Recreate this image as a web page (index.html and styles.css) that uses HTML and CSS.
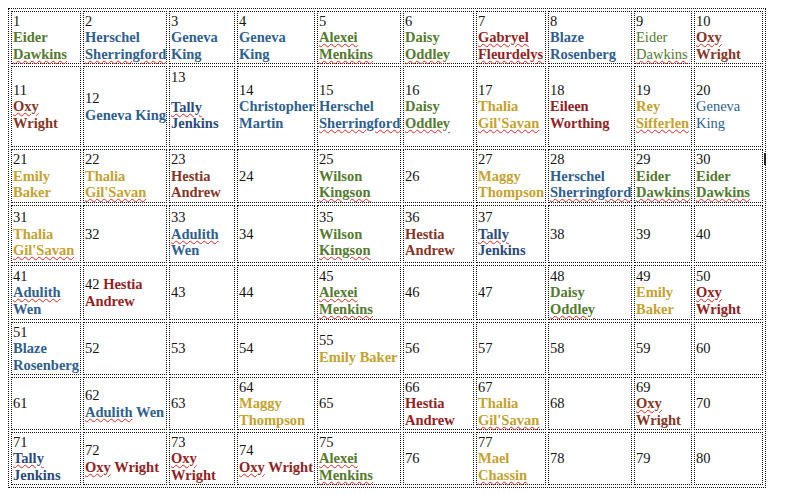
FILE: index.html
```html
<!DOCTYPE html>
<html>
<head>
<meta charset="utf-8">
<link rel="stylesheet" href="styles.css">
</head>
<body>
<svg class="handle" width="9" height="9" viewBox="0 0 9 9"><rect x="0.5" y="0.5" width="7" height="7" fill="#fff" stroke="#8a8a8a"/><path d="M4 1.5V6.5M1.5 4H6.5M3 2.5L4 1.5L5 2.5M3 5.5L4 6.5L5 5.5M2.5 3L1.5 4L2.5 5M5.5 3L6.5 4L5.5 5" fill="none" stroke="#333" stroke-width="0.8"/></svg>
<span class="caret"></span>
<table class="grid">
<colgroup>
<col class="w1"><col class="w2"><col class="w3"><col class="w4"><col class="w5"><col class="w6"><col class="w7"><col class="w8"><col class="w9"><col class="w10">
</colgroup>
<tr class="r1">
<td>1<br><b class="g">Eider <span class="sp">Dawkins</span></b></td>
<td>2<br><b class="b">Herschel <span class="sp">Sherringford</span></b></td>
<td>3<br><b class="b">Geneva King</b></td>
<td>4<br><b class="b">Geneva King</b></td>
<td>5<br><b class="g"><span class="sp">Alexei</span> <span class="sp">Menkins</span></b></td>
<td>6<br><b class="g">Daisy <span class="sp">Oddley</span></b></td>
<td>7<br><b class="r"><span class="sp">Gabryel</span> <span class="sp">Fleurdelys</span></b></td>
<td>8<br><b class="b">Blaze Rosenberg</b></td>
<td>9<br><span class="g">Eider <span class="sp">Dawkins</span></span></td>
<td>10<br><b class="br"><span class="sp">Oxy</span> Wright</b></td>
</tr>
<tr class="r2">
<td>11<br><b class="br"><span class="sp">Oxy</span> Wright</b></td>
<td>12<br><b class="b nw">Geneva King</b></td>
<td class="top">13<b class="nv gap"><span class="sp">Tally</span> Jenkins</b></td>
<td>14<br><b class="b">Christopher Martin</b></td>
<td>15<br><b class="b">Herschel <span class="sp">Sherringford</span></b></td>
<td>16<br><b class="g">Daisy <span class="sp">Oddley</span></b></td>
<td>17<br><b class="y">Thalia <span class="sp">Gil'Savan</span></b></td>
<td>18<br><b class="r">Eileen Worthing</b></td>
<td>19<br><b class="y">Rey <span class="sp">Sifferlen</span></b></td>
<td>20<br><span class="b">Geneva King</span></td>
</tr>
<tr class="r3">
<td>21<br><b class="y">Emily Baker</b></td>
<td>22<br><b class="y">Thalia <span class="sp">Gil'Savan</span></b></td>
<td>23<br><b class="br">Hestia Andrew</b></td>
<td>24</td>
<td>25<br><b class="g">Wilson <span class="sp">Kingson</span></b></td>
<td>26</td>
<td>27<br><b class="y">Maggy Thompson</b></td>
<td>28<br><b class="b">Herschel <span class="sp">Sherringford</span></b></td>
<td>29<br><b class="g">Eider <span class="sp">Dawkins</span></b></td>
<td>30<br><b class="g">Eider <span class="sp">Dawkins</span></b></td>
</tr>
<tr class="r4">
<td>31<br><b class="y">Thalia <span class="sp">Gil'Savan</span></b></td>
<td>32</td>
<td>33<br><b class="b"><span class="sp">Adulith</span> Wen</b></td>
<td>34</td>
<td>35<br><b class="g">Wilson <span class="sp">Kingson</span></b></td>
<td>36<br><b class="br">Hestia Andrew</b></td>
<td>37<br><b class="nv"><span class="sp">Tally</span> Jenkins</b></td>
<td>38</td>
<td>39</td>
<td>40</td>
</tr>
<tr class="r5">
<td>41<br><b class="b"><span class="sp">Adulith</span> Wen</b></td>
<td>42 <b class="r">Hestia Andrew</b></td>
<td>43</td>
<td>44</td>
<td>45<br><b class="g"><span class="sp">Alexei</span> <span class="sp">Menkins</span></b></td>
<td>46</td>
<td>47</td>
<td>48<br><b class="g">Daisy <span class="sp">Oddley</span></b></td>
<td>49<br><b class="y">Emily Baker</b></td>
<td>50<br><b class="r"><span class="sp">Oxy</span> Wright</b></td>
</tr>
<tr class="r6">
<td>51<br><b class="b">Blaze Rosenberg</b></td>
<td>52</td>
<td>53</td>
<td>54</td>
<td>55<br><b class="y nw">Emily Baker</b></td>
<td>56</td>
<td>57</td>
<td>58</td>
<td>59</td>
<td>60</td>
</tr>
<tr class="r7">
<td>61</td>
<td>62<br><b class="b nw"><span class="sp">Adulith</span> Wen</b></td>
<td>63</td>
<td>64<br><b class="y">Maggy Thompson</b></td>
<td>65</td>
<td>66<br><b class="r">Hestia Andrew</b></td>
<td>67<br><b class="y">Thalia <span class="sp">Gil'Savan</span></b></td>
<td>68</td>
<td>69<br><b class="br"><span class="sp">Oxy</span> Wright</b></td>
<td>70</td>
</tr>
<tr class="r8">
<td>71<br><b class="nv"><span class="sp">Tally</span> Jenkins</b></td>
<td>72<br><b class="r nw"><span class="sp">Oxy</span> Wright</b></td>
<td>73<br><b class="r"><span class="sp">Oxy</span> Wright</b></td>
<td>74<br><b class="r nw"><span class="sp">Oxy</span> Wright</b></td>
<td>75<br><b class="g"><span class="sp">Alexei</span> <span class="sp">Menkins</span></b></td>
<td>76</td>
<td>77<br><b class="y">Mael <span class="sp">Chassin</span></b></td>
<td>78</td>
<td>79</td>
<td>80</td>
</tr>
</table>
</body>
</html>
```

FILE: styles.css
```css
html, body {
  background: #fff;
}
body {
  margin: 8px;
  position: relative;
  font-family: "Liberation Serif", "Times New Roman", serif;
  font-size: 14.5px;
  line-height: 16.5px;
  color: #141414;
}
.handle {
  position: absolute;
  left: -8px;
  top: -8px;
  display: block;
}
.caret {
  position: absolute;
  left: 756px;
  top: 145px;
  width: 2px;
  height: 12px;
  background: #222;
}
.grid {
  table-layout: fixed;
  width: 758px;
  border-collapse: separate;
  border-spacing: 2px;
  border: 1px dotted #111;
}
.grid td {
  box-sizing: border-box;
  border: 1px dotted #111;
  padding: 0 1px;
  vertical-align: middle;
  white-space: normal;
  overflow: visible;
}
.grid td.top {
  vertical-align: top;
  padding-top: 2px;
}
.gap {
  display: block;
  margin-top: 13px;
}
.nw {
  white-space: nowrap;
}
.w1 { width: 70px; }
.w2 { width: 84px; }
.w3 { width: 66px; }
.w4 { width: 78px; }
.w5 { width: 84px; }
.w6 { width: 71px; }
.w7 { width: 70px; }
.w8 { width: 84px; }
.w9 { width: 58px; }
.w10 { width: 69px; }
.r1 { height: 53px; }
.r2 { height: 81px; }
.r3 { height: 54px; }
.r4 { height: 58px; }
.r5 { height: 55px; }
.r6 { height: 53px; }
.r7 { height: 53px; }
.r8 { height: 53px; }
b { font-weight: bold; }
.g { color: #547a2f; }
.b { color: #2f5f8f; }
.nv { color: #2b4a7c; }
.r { color: #921f24; }
.br { color: #863526; }
.y { color: #c4a22e; }
.sp {
  text-decoration-line: underline;
  text-decoration-style: wavy;
  text-decoration-color: #e2231a;
  text-decoration-thickness: 1px;
  text-underline-offset: 1px;
}
```
